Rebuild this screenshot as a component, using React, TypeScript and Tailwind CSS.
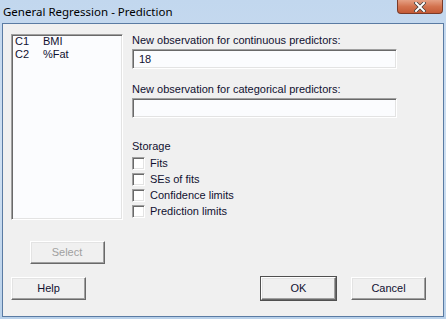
const sunken =
  "border border-t-[#a0a0a0] border-l-[#a0a0a0] border-r-white border-b-white shadow-[inset_1px_1px_0_#696969,inset_-1px_-1px_0_#e3e3e3]";
const raised =
  "border border-t-white border-l-white border-r-[#696969] border-b-[#696969] shadow-[inset_-1px_-1px_0_#a0a0a0,inset_1px_1px_0_#e3e3e3] bg-[#f0f0f0]";

function Button({ label, disabled, def }: { label: string; disabled?: boolean; def?: boolean }) {
  return (
    <div className={`h-[23px] w-[75px] ${def ? "outline outline-1 outline-[#505050]" : ""}`}>
      <div
        className={`${raised} flex h-full w-full items-center justify-center text-[11px] ${
          disabled ? "text-[#a0a0a0]" : "text-[#101030]"
        }`}
      >
        {label}
      </div>
    </div>
  );
}

function Check({ label }: { label: string }) {
  return (
    <div className="flex h-[16px] items-center gap-[5px]">
      <div className={`${sunken} h-[13px] w-[13px] bg-white`} />
      <span>{label}</span>
    </div>
  );
}

export default function App() {
  return (
    <div className="flex h-[319px] w-[446px] flex-col bg-gradient-to-b from-[#c2d7ee] via-[#cfe0f2] to-[#b9d1ea] font-['Liberation_Sans',sans-serif]">
      {/* title bar */}
      <div className="flex h-[23px] items-start justify-between pl-[3px]">
        <span className="mt-[3px] font-['Noto_Sans',sans-serif] text-[11.5px] text-black">
          General Regression - Prediction
        </span>
        <div className="mr-[3px] flex h-[14px] w-[46px] items-center justify-center rounded-b-[4px] border border-t-0 border-[#7a3a28] bg-gradient-to-b from-[#e5a084] via-[#d3734f] to-[#c45a36]">
          <svg width="12" height="10" viewBox="0 0 12 10">
            <path d="M2 1 L10 9 M10 1 L2 9" stroke="#3b3b3b" strokeWidth="3.4" strokeLinecap="square" />
            <path d="M2 1 L10 9 M10 1 L2 9" stroke="#ffffff" strokeWidth="2" strokeLinecap="square" />
          </svg>
        </div>
      </div>

      {/* client area */}
      <div className="mx-[2px] flex h-[294px] flex-col border border-[#5a7ba3] bg-[#f0f0f0] text-[11px] text-[#101030]">
        <div className="flex pt-[10px] pl-[8px]">
          <div className="flex w-[112px] flex-col items-center">
            <div className={`${sunken} h-[186px] w-[112px] bg-[#fbfcfe] px-[3px] leading-[13px]`}>
              <div className="flex">
                <span className="w-[28px]">C1</span>
                <span>BMI</span>
              </div>
              <div className="flex">
                <span className="w-[28px]">C2</span>
                <span>%Fat</span>
              </div>
            </div>
            <div className="mt-[21px]">
              <Button label="Select" disabled />
            </div>
          </div>

          <div className="ml-[9px] flex w-[265px] flex-col">
            <div className="leading-[13px]">New observation for continuous predictors:</div>
            <div className={`${sunken} mt-[2px] flex h-[20px] items-center bg-[#fbfcfe] px-[6px]`}>18</div>
            <div className="mt-[14px] leading-[13px]">New observation for categorical predictors:</div>
            <div className={`${sunken} mt-[2px] h-[20px] bg-[#fbfcfe]`} />
            <div className="mt-[22px] leading-[13px]">Storage</div>
            <div className="mt-[2px] flex flex-col">
              <Check label="Fits" />
              <Check label="SEs of fits" />
              <Check label="Confidence limits" />
              <Check label="Prediction limits" />
            </div>
          </div>
        </div>

        <div className="mt-[13px] flex pl-[8px]">
          <Button label="Help" />
          <div className="ml-[175px]">
            <Button label="OK" def />
          </div>
          <div className="ml-[15px]">
            <Button label="Cancel" />
          </div>
        </div>
      </div>
    </div>
  );
}
